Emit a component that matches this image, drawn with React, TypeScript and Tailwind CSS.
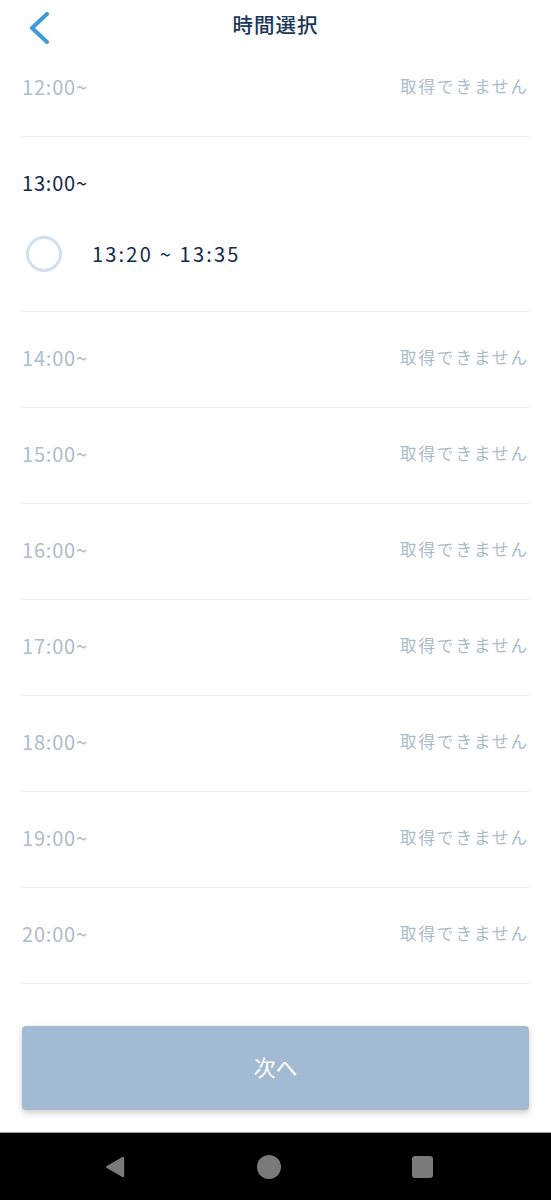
import React from "react";

const font = { fontFamily: '"Noto Sans CJK JP", "Noto Sans", sans-serif' };

const hours = ["14:00", "15:00", "16:00", "17:00", "18:00", "19:00", "20:00"];

function Unavailable({ time }: { time: string }) {
  return (
    <div className="flex h-[96px] items-center justify-between border-b border-[#e8f0f3] pb-[4px]">
      <span className="text-[20px] text-[#aebdcd] tracking-[0.8px]">{time}~</span>
      <span className="text-[16.5px] text-[#aabbcc] tracking-[2px]">取得できません</span>
    </div>
  );
}

export default function App() {
  return (
    <div className="flex h-[1200px] w-[551px] flex-col bg-white" style={font}>
      {/* header */}
      <div className="relative flex h-[41px] items-start justify-center pt-[9px]">
        <svg className="absolute left-[28px] top-[12px]" width="22" height="32" viewBox="0 0 22 32">
          <path d="M19 2 L4 16 L19 30" fill="none" stroke="#3c9ad8" strokeWidth="4" strokeLinecap="round" strokeLinejoin="round" />
        </svg>
        <h1 className="text-[20.5px] font-medium text-[#17365a] tracking-[1px]">時間選択</h1>
      </div>

      <div className="mx-[22px] flex flex-1 flex-col">
        <Unavailable time="12:00" />

        {/* 13:00 */}
        <div className="flex h-[175px] flex-col border-b border-[#e8f0f3]">
          <div className="pt-[32px] text-[20px] leading-[28px] text-[#0f2a4a] tracking-[0.8px]">13:00~</div>
          <div className="mt-[39px] flex items-center gap-[30px]">
            <span className="ml-[4px] h-[36px] w-[36px] rounded-full border-[3.5px] border-[#d3dfea]" />
            <span className="text-[20px] text-[#0f2a4a] tracking-[2.2px]">13:20 ~ 13:35</span>
          </div>
        </div>

        {hours.map((h) => (
          <Unavailable key={h} time={h} />
        ))}

        <div className="mt-auto mb-[22px]">
          <button className="flex h-[84px] w-full items-center justify-center rounded-[4px] bg-[#a3bbd2] pb-[4px] text-[22px] text-white shadow-[0_3px_6px_rgba(0,0,0,0.2)]">
            次へ
          </button>
        </div>
      </div>

      {/* android nav */}
      <div className="flex h-[68px] items-center justify-center gap-[131px] border-t border-[#9a9a9a] bg-black pr-[14px]">
        <svg width="22" height="24" viewBox="0 0 24 26">
          <path d="M20 2 Q22 1 22 4 L22 22 Q22 25 20 24 L3 14 Q1 13 3 12 Z" fill="#7a7a7a" />
        </svg>
        <span className="h-[24px] w-[24px] rounded-full bg-[#7a7a7a]" />
        <span className="h-[22px] w-[21px] rounded-[3px] bg-[#7a7a7a]" />
      </div>
    </div>
  );
}
